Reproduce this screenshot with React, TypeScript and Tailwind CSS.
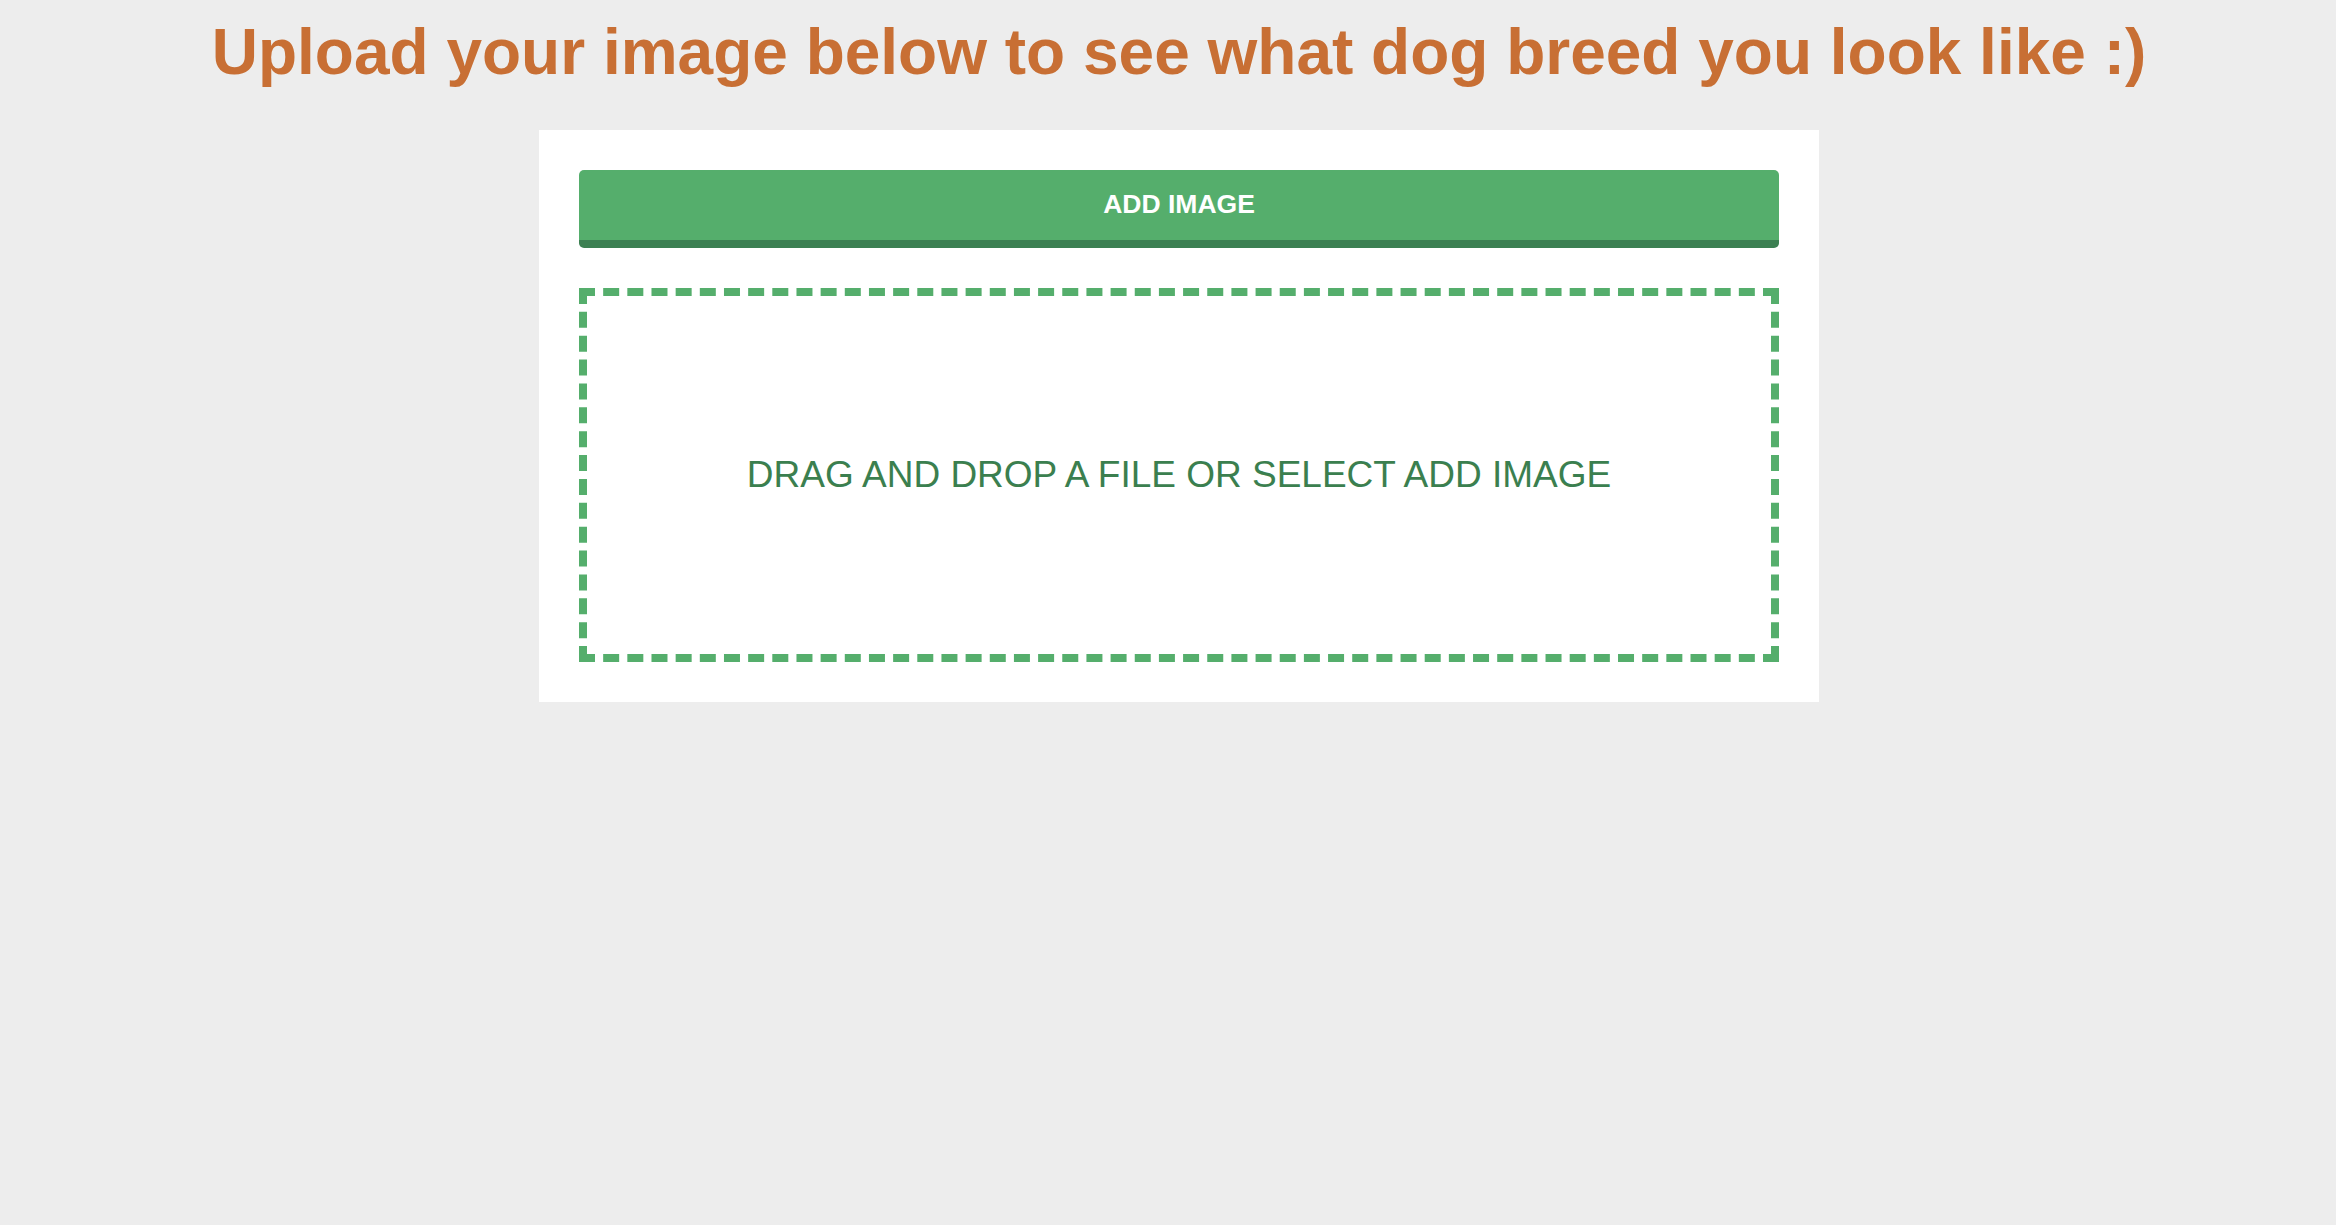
export default function App() {
  return (
    <div
      className="min-h-screen bg-[#ededed] pl-[22px]"
      style={{ fontFamily: '"Liberation Sans", Arial, sans-serif' }}
    >
      <h1 className="pt-[20px] text-center text-[64px] font-bold leading-none text-[#c86f34]">
        Upload your image below to see what dog breed you look like :)
      </h1>

      <div className="mx-auto mt-[46px] w-[1280px] bg-white p-10">
        <button className="block h-[78px] w-full rounded-[5px] border-b-8 border-[#3c8052] bg-[#55ae6c] text-[26.5px] font-bold text-white">
          ADD IMAGE
        </button>

        <div className="mt-10 flex h-[374px] items-center justify-center border-8 border-dashed border-[#55ae6c]">
          <p className="text-[37px] text-[#3b7f4f]">DRAG AND DROP A FILE OR SELECT ADD IMAGE</p>
        </div>
      </div>
    </div>
  );
}
